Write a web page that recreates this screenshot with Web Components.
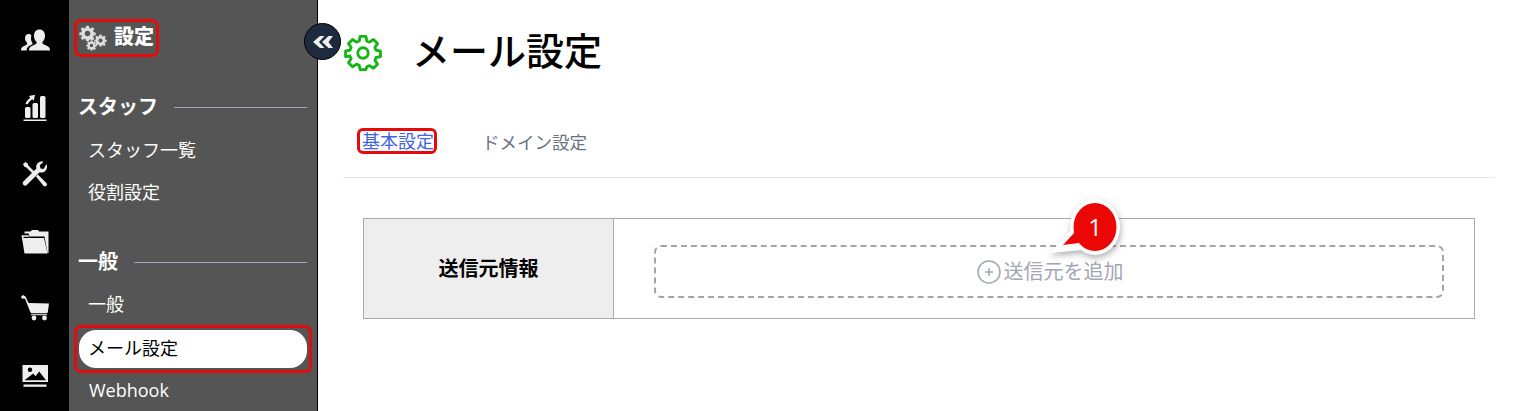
<!DOCTYPE html>
<html lang="ja"><head><meta charset="utf-8"><title>メール設定</title>
<style>
html,body{margin:0;padding:0;height:100%;overflow:hidden;background:#fff;font-family:"Open Sans","Noto Sans CJK JP",sans-serif}
</style></head><body>
<app-shell>
  <icon-rail slot="rail"></icon-rail>
  <side-nav slot="nav"></side-nav>
  <collapse-button slot="toggle"></collapse-button>
  <main-panel slot="main"></main-panel>
</app-shell>
<script>
const def=(name,html)=>customElements.define(name,class extends HTMLElement{
  constructor(){super();this.attachShadow({mode:'open'}).innerHTML=html;}
});
def('app-shell',`<style>:host{display:flex;height:411px;width:1520px;position:relative;overflow:hidden}
::slotted([slot=main]){flex:1;min-width:0}</style>
<slot name="rail"></slot><slot name="nav"></slot><slot name="main"></slot><slot name="toggle"></slot>`);

const icons=[
`<svg width="30" height="24" viewBox="0 0 30 24"><path fill="#eee" d="M1 22.500c0-2.500.8-3.500 2.500-4.300l3.500-1.700v-2c-1.200-1-2-2.600-2-4.300C5 7.500 6.500 6 8.500 6c1.200 0 2.200.5 2.900 1.400-.3 1-.4 1.900-.4 2.900 0 1.900.6 3.600 1.500 4.900v1.100l-3 1.500c-1.600.8-2.800 2.300-2.900 4.700z"/><path fill="#eee" d="M9 22.500c0-2.500.8-3.600 2.800-4.500l4.700-2.200v-2.100c-1.500-1.200-2.500-3.200-2.500-5.700C14 4 16 1.500 19.500 1.500S25 4 25 8c0 2.500-1 4.500-2.500 5.700v2.100l4.700 2.200c1.800.9 2.800 2 2.800 4.500z"/></svg>`,
`<svg width="26" height="30" viewBox="0 0 26 30"><g fill="#eee"><rect x="3" y="15" width="5.500" height="11" rx="1.500"/><rect x="10.500" y="11" width="5.500" height="15" rx="1.500"/><rect x="18" y="4" width="5.500" height="22" rx="1.500"/><rect x="1.500" y="27.500" width="23" height="1.500"/><path d="M3.500 12c.6-2.500 2.200-4.500 4.700-6L7 4l6-1.200-1.300 6-1.400-1.600C8.300 8.500 6.700 10 5.700 12.300z"/></g></svg>`,
`<svg width="27" height="28" viewBox="0 0 28 28"><g fill="#eee"><path d="M2 4 4.500 1.500l2.500 1.700.6 2 6.900 6.900-2 2L5.600 7.200l-2-.6z"/><path d="M15.500 16.500l2-2 8.800 8.800c.9.900.9 2.100 0 3-.9.900-2.100.9-3 0z"/><path d="M26.500 3.500c1 2.700.5 5.500-1.300 7.300-1.700 1.600-3.800 2-5.800 1.400L6 25.400c-1 1-2.600 1-3.500-.1-.9-1-.9-2.500 0-3.400L16 8.400c-.6-2-.1-4.200 1.400-5.700C19 1 21.200.6 23.500 1.400l-4 3.600.7 3.200 3.200.7z"/></g></svg>`,
`<svg width="30" height="26" viewBox="0 0 30 26"><g fill="#eee"><path d="M4.500 3.500H10.500L12 2h6l1 1.500h9.500V25H27.500L24.500 8.500H9.500L8.500 5.500H4.500z"/><path d="M1.500 7.200h7l1 2.800h14.500L27.500 25.500H4.500z"/><rect x="3.500" y="8.800" width="5.500" height="1.200" fill="#000"/></g></svg>`,
`<svg width="30" height="26" viewBox="0 0 30 26"><g fill="#eee"><path d="M1 1.800 3 0l2.500 1.500 3 6.500L29 8.500 27.800 17c-.2.800-.7 1.200-1.500 1.200H12c-.8 0-1.400-.4-1.700-1.200L5 3.800 1.800 3.500z"/><rect x="11" y="19.200" width="16" height="1"/><circle cx="14" cy="23" r="2.400"/><circle cx="24.500" cy="23" r="2.400"/></g></svg>`,
`<svg width="28" height="24" viewBox="0 0 28 24"><path fill="#eee" fill-rule="evenodd" d="M1.500 1H27v17H1.500zM3.500 16.300h21.500l-6.800-8.800-3.700 4.700-2.200-2.700zM9 3.500A2.200 2.200 0 1 0 9.010 8 2.200 2.200 0 0 0 9 3.500z"/><rect x="2.500" y="20.500" width="23" height="2.300" fill="#eee"/></svg>`];
def('icon-rail',`<style>:host{display:flex;flex:none;flex-direction:column;align-items:center;width:69px;height:411px;background:#000;padding-top:6px;box-sizing:border-box}
div{height:67.200px;flex:none;display:flex;align-items:center;justify-content:center}svg{display:block}</style>
${icons.map(i=>`<div>${i}</div>`).join('')}`);

const cogPath=`M10 1h4l.6 3.200 1.900.8L19.200 3.200 22 6l-1.800 2.700.8 1.900L24 11v4l-3 .6-.8 1.900 1.800 2.700-2.800 2.800-2.700-1.800-1.900.8L14 24h-4l-.6-3-1.900-.8-2.700 1.800L2 19.200l1.800-2.700-.8-1.900L0 15v-4l3-.4.800-1.900L2 6l2.800-2.800 2.700 1.800 1.900-.8z`;
const smallCog=(style,s)=>`<svg style="${style}" width="${s}" height="${s}" viewBox="0 0 24 25"><path fill="#ddd" fill-rule="evenodd" d="${cogPath}M12 8.500a4 4 0 1 0 .01 8 4 4 0 0 0-.01-8z"/></svg>`;
def('nav-heading',`<style>:host{display:flex;align-items:center;height:24px;padding-left:9px;padding-right:10px;font-size:20px;font-weight:700;color:#fff}
span{padding-bottom:2px}
i{flex:1;height:1px;background:#a3a6b8;margin-left:16px;margin-top:2px}</style><span><slot></slot></span><i></i>`);
def('nav-item',`<style>:host{display:flex;align-items:center;height:38px;margin:0 10px;padding-left:9px;padding-bottom:2px;font-size:18px;color:#fff;position:relative;box-sizing:border-box}
:host([active]){background:#fff;color:#000;border-radius:17px;margin-top:3px;margin-bottom:-1px;padding-bottom:4px;}
:host([active])::after{content:"";position:absolute;inset:-5px;border:3px solid #e60b0b;border-radius:7px}</style><slot></slot>`);
def('side-nav',`<style>:host{display:block;flex:none;width:249px;height:411px;background:#555;border-right:1px solid #000;box-sizing:border-box;overflow:hidden}
.h{display:flex;align-items:center;gap:6px;width:max-content;height:32px;margin:22px 0 0 8px;padding:0 2px;font-size:20px;font-weight:700;color:#fff;outline:3px solid #e60b0b;border-radius:4px;line-height:1}
.h b{padding-bottom:2px}
.sp{display:block;position:relative;width:29px;height:26px}
.sp svg{position:absolute}
nav-heading.a{margin-top:40px}nav-heading.b{margin-top:38px}
.l{display:flex;flex-direction:column;gap:4px;margin-top:13px}
.l2{margin-top:12px}
.w{padding-bottom:0;padding-left:10px}</style>
<div class="h"><span class="sp">${smallCog('left:0;top:0',17)}${smallCog('left:15px;top:9px',13)}${smallCog('left:7px;top:15px',11)}</span><b>設定</b></div>
<nav-heading class="a">スタッフ</nav-heading>
<div class="l"><nav-item>スタッフ一覧</nav-item><nav-item>役割設定</nav-item></div>
<nav-heading class="b">一般</nav-heading>
<div class="l l2"><nav-item>一般</nav-item><nav-item active>メール設定</nav-item><nav-item class="w" style="padding-bottom:0;padding-left:10px">Webhook</nav-item></div>`);
def('collapse-button',`<style>:host{position:absolute;left:304px;top:23px;width:37px;height:37px;border-radius:50%;background:#1e2a3d;border:1px solid #000;box-sizing:border-box;display:flex;align-items:center;justify-content:center}</style>
<svg width="20" height="12" viewBox="0 0 20 12"><path fill="#eee" d="M7 0h4.500L6 6l5.500 6H7L0 6zM15.500 0H20l-4.500 6 4.500 6h-4.500L9 6z"/></svg>`);
def('note-badge',`<style>:host{position:absolute;left:-50px;top:-48px;width:80px;height:68px;display:block}
svg{display:block;overflow:visible;filter:drop-shadow(1px 3px 3px rgba(0,0,0,.3))}
span{position:absolute;left:30px;top:7px;width:42px;height:42px;line-height:42px;text-align:center;color:#fff;font-size:24px;font-family:"Open Sans",sans-serif}</style>
<svg width="80" height="68" viewBox="0 0 80 68"><ellipse cx="51" cy="28" rx="25" ry="28" fill="#fff"/><path fill="#fff" d="M6 54 27 31 38 51z"/><ellipse cx="51" cy="28" rx="21.500" ry="24" fill="#ec0707"/><path fill="#ec0707" d="M19 46 31 33 35 44z"/></svg><span>1</span>`);
def('main-panel',`<style>:host{display:block;height:411px;padding:0 25px;box-sizing:border-box;position:relative}
h1{display:flex;align-items:center;margin:0;height:105px;font-size:38px;font-weight:500;color:#000;line-height:1;padding-bottom:6px;box-sizing:border-box}
h1 svg{margin-left:0;margin-right:29px;margin-top:6px;flex:none}
.t{display:flex;align-items:center;gap:48px;height:72px;border-bottom:1px solid #e5e5e5;padding-left:17px;font-size:18px;color:#6b7280}
.t span{font-size:17.500px}
.t b{font-weight:400;color:#3f63e6;outline:3px solid #e60b0b;border-radius:3px;padding:0 0 0 2px;line-height:20px;height:20px}
.g{display:grid;grid-template-columns:250px 1fr;margin:40px 20px 0;height:101px;border:1px solid #aaa;box-sizing:border-box}
.c1{background:#eee;border-right:1px solid #aaa;display:flex;align-items:center;justify-content:center;font-size:20px;font-weight:700;padding-bottom:3px;box-sizing:border-box;color:#000}
.c2{padding:26px 30px 20px 40px}
.a{position:relative;height:53px;border:2px dashed #a1a3b3;border-radius:7px;box-sizing:border-box;display:flex;align-items:center;justify-content:center;font-size:20px;color:#a3a6b5;gap:3px;padding-bottom:3px;padding-left:2px}
.p{width:24px;height:24px;display:block;flex:none;margin-top:3px}
.at{position:absolute;left:438px;top:0;width:0;height:0}
</style>
<h1><svg width="40" height="40" viewBox="-1.300 -1.300 26.600 27.600"><path fill="none" stroke="#14b514" stroke-width="2" stroke-linejoin="round" d="${cogPath}"/><circle cx="12" cy="12.500" r="3.600" fill="none" stroke="#14b514" stroke-width="2"/></svg>メール設定</h1>
<div class="t"><b>基本設定</b><span>ドメイン設定</span></div>
<div class="g">
<div class="c1">送信元情報</div>
<div class="c2"><div class="a"><svg class="p" viewBox="0 0 24 24"><circle cx="12" cy="12" r="11" fill="none" stroke="#a3a6b5" stroke-width="1.500"/><path d="M8 12h8M12 8v8" stroke="#a3a6b5" stroke-width="1.500"/></svg>送信元を追加<div class="at"><note-badge></note-badge></div></div></div>
</div>`);
</script>
</body></html>
